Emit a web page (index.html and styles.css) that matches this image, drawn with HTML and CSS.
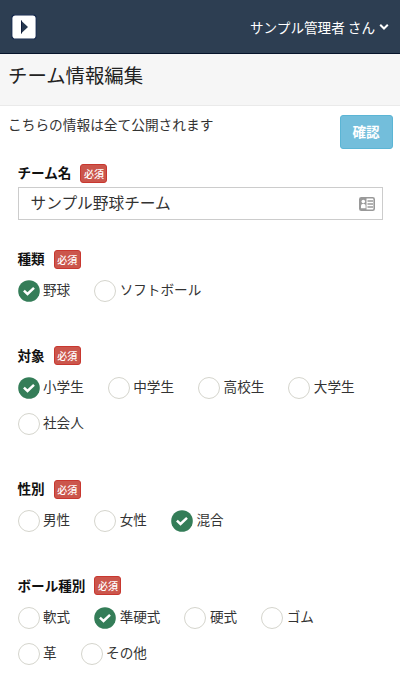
FILE: index.html
```html
<!DOCTYPE html>
<html lang="ja">
<head>
<meta charset="utf-8">
<title>チーム情報編集</title>
<link rel="stylesheet" href="styles.css">
</head>
<body>
<svg class="defs" width="0" height="0"><symbol id="check" viewBox="0 0 22 22"><circle cx="11" cy="11" r="10.8" fill="#347d58"/><path d="M5.900 10.700 9.500 14 16 7.800" fill="none" stroke="#fff" stroke-width="2.500"/></symbol></svg>
<header class="navbar">
  <svg class="toggle" viewBox="0 0 26 26"><rect x=".8" y=".8" width="24.4" height="24.4" rx="3.5" fill="#fff" stroke="#14284b" stroke-width="1.2"/><path d="M10 6.5 17 13 10 19.500z" fill="#26384f"/><path d="M10.500 6.500V19.500" stroke="#101c3c"/></svg>
  <div class="user">サンプル管理者 さん<svg class="chevron" viewBox="0 0 10 8"><path d="M1.200 1.700 5 5.500 8.800 1.700" fill="none" stroke="#fff" stroke-width="2"/></svg></div>
</header>
<div class="heading"><h1>チーム情報編集</h1></div>
<div class="intro"><p>こちらの情報は全て公開されます</p><button class="confirm">確認</button></div>
<main class="form">
  <section class="group name">
    <div class="label">チーム名<span class="badge">必須</span></div>
    <div class="field"><span>サンプル野球チーム</span>
      <svg class="card" viewBox="0 0 16 14"><rect x=".8" y=".8" width="14.4" height="12.400" rx="1.500" fill="#fff" stroke="#999" stroke-width="1.600"/><path d="M1 1h6.500v12H1z" fill="#999"/><circle cx="4.300" cy="4.600" r="1.800" fill="#fff"/><path d="M2 11.200V9q0-2 1.500-2h1.600q1.500 0 1.500 2v2.200z" fill="#fff"/><path d="M8.500 4H14M8.500 7H14M8.500 10H14" stroke="#999" stroke-width="1.400"/></svg>
    </div>
  </section>
  <section class="group">
    <div class="label">種類<span class="badge">必須</span></div>
    <div class="options">
      <div class="option"><svg class="mark"><use href="#check"/></svg><span>野球</span></div>
      <div class="option"><i class="mark ring"></i><span>ソフトボール</span></div>
    </div>
  </section>
  <section class="group">
    <div class="label">対象<span class="badge">必須</span></div>
    <div class="options">
      <div class="option"><svg class="mark"><use href="#check"/></svg><span>小学生</span></div>
      <div class="option"><i class="mark ring"></i><span>中学生</span></div>
      <div class="option"><i class="mark ring"></i><span>高校生</span></div>
      <div class="option"><i class="mark ring"></i><span>大学生</span></div>
      <div class="option"><i class="mark ring"></i><span>社会人</span></div>
    </div>
  </section>
  <section class="group">
    <div class="label">性別<span class="badge">必須</span></div>
    <div class="options">
      <div class="option"><i class="mark ring"></i><span>男性</span></div>
      <div class="option"><i class="mark ring"></i><span>女性</span></div>
      <div class="option"><svg class="mark"><use href="#check"/></svg><span>混合</span></div>
    </div>
  </section>
  <section class="group">
    <div class="label">ボール種別<span class="badge">必須</span></div>
    <div class="options">
      <div class="option"><i class="mark ring"></i><span>軟式</span></div>
      <div class="option"><svg class="mark"><use href="#check"/></svg><span>準硬式</span></div>
      <div class="option"><i class="mark ring"></i><span>硬式</span></div>
      <div class="option"><i class="mark ring"></i><span>ゴム</span></div>
      <div class="option"><i class="mark ring"></i><span>革</span></div>
      <div class="option"><i class="mark ring"></i><span>その他</span></div>
    </div>
  </section>
</main>
</body>
</html>
```
FILE: styles.css
```css
* { box-sizing: border-box; }
body {
  margin: 0;
  height: 680px;
  overflow: hidden;
  background: #fff;
  color: #333;
  font: 400 13.6px/20px "Noto Sans CJK JP", sans-serif;
}
h1, p { margin: 0; }
.defs { display: none; }
.navbar {
  display: flex;
  align-items: center;
  justify-content: space-between;
  height: 54px;
  padding: 0 11px;
  background: #2d3e52;
  border-bottom: 1px solid #06142b;
}
.toggle { width: 26px; height: 26px; }
.user {
  display: flex;
  align-items: center;
  color: #fff;
  white-space: pre;
}
.chevron { width: 10px; height: 8px; margin-left: 4px; }
.heading {
  height: 52px;
  padding: 7px 8px;
  background: #f6f6f6;
  border-bottom: 1px solid #eaeaea;
}
h1 { color: #222; font-size: 19.4px; line-height: 28px; font-weight: 400; }
.intro {
  display: flex;
  justify-content: space-between;
  height: 56px;
  padding: 9px 7px 0 8px;
}
.intro p { margin-top: -1px; font-size: 13.7px; }
.confirm {
  width: 53px;
  height: 34px;
  padding: 0 1px 2px 0;
  border: 1px solid #5bb5d5;
  border-radius: 3px;
  background: #73bedb;
  color: #fff;
  font: 700 13.6px/20px "Noto Sans CJK JP", sans-serif;
}
.form { padding: 0 17.5px; }
.group { padding-bottom: 42.8px; }
.name { padding-bottom: 29px; }
.label {
  display: flex;
  align-items: center;
  height: 20px;
  color: #111;
  font-weight: 700;
}
.badge {
  width: 27px;
  height: 19px;
  margin: 2px 0 0 9px;
  border: 1px solid #c8372f;
  border-radius: 3px;
  background: #cb564c;
  color: #fff;
  font-size: 10px;
  line-height: 17px;
  font-weight: 500;
  text-align: center;
}
.field {
  display: flex;
  align-items: center;
  justify-content: space-between;
  height: 33px;
  margin-top: 5px;
  padding: 0 7px 0 12px;
  border: 1px solid #ccc;
  font-size: 15.7px;
}
.field span { padding-bottom: 2px; }
.name + .group { margin-top: -1px; }
.card { width: 16px; height: 14px; }
.options {
  display: flex;
  flex-wrap: wrap;
  gap: 14.5px 24px;
  padding: 12px 10px 0 0;
}
.option { display: flex; align-items: center; gap: 3.5px; height: 22px; }
.option span { padding-bottom: 4px; }
.mark { width: 22px; height: 22px; flex: none; }
.ring { border: 1px solid #d5d5cd; border-radius: 50%; }
```
